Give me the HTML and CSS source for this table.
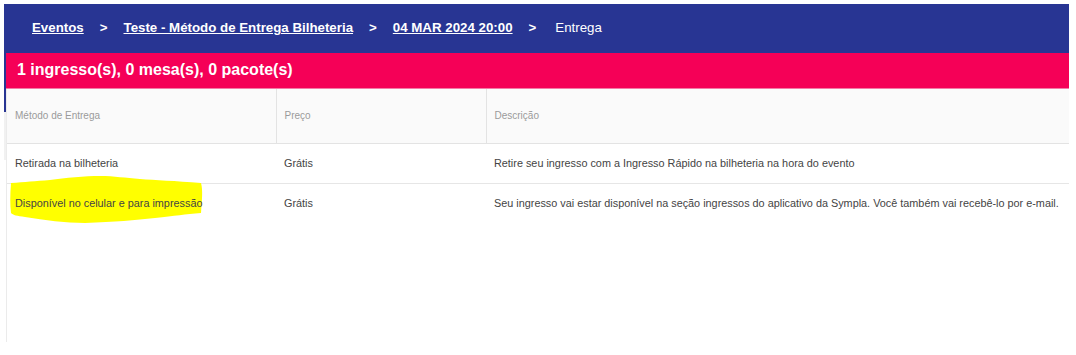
FILE: index.html
```html
<!DOCTYPE html>
<html lang="pt-BR">
<head>
<meta charset="utf-8">
<title>Entrega</title>
<link rel="stylesheet" href="styles.css">
</head>
<body>
<div class="page">
  <nav class="topbar">
    <a class="crumb" href="#">Eventos</a>
    <span class="sep">&gt;</span>
    <a class="crumb" href="#">Teste - Método de Entrega Bilheteria</a>
    <span class="sep">&gt;</span>
    <a class="crumb" href="#">04 MAR 2024 20:00</a>
    <span class="sep">&gt;</span>
    <span class="current">Entrega</span>
  </nav>
  <div class="main">
    <div class="edge"></div>
    <div class="content">
      <div class="summary">1 ingresso(s), 0 mesa(s), 0 pacote(s)</div>
      <div class="table-wrap">
        <table class="grid">
          <colgroup>
            <col class="c1"><col class="c2"><col class="c3">
          </colgroup>
          <thead>
            <tr>
              <th>Método de Entrega</th>
              <th>Preço</th>
              <th>Descrição</th>
            </tr>
          </thead>
          <tbody>
            <tr>
              <td>Retirada na bilheteria</td>
              <td>Grátis</td>
              <td>Retire seu ingresso com a Ingresso Rápido na bilheteria na hora do evento</td>
            </tr>
            <tr class="last">
              <td class="marked">
                <svg class="highlight" viewBox="0 0 200 50" width="200" height="50" aria-hidden="true">
                  <path d="M6 8 C 20 7, 30 6, 45 5 C 60 3, 80 1, 95 1 C 110 1, 120 3, 135 4 C 150 5, 170 6, 196 8 C 198 15, 197 25, 196 38 C 180 39, 170 41, 150 43 C 130 45, 110 47, 80 48 C 60 48, 40 45, 20 42 C 12 41, 8 40, 6 38 C 5 30, 5 20, 6 8 Z" fill="#ffff00"/>
                </svg>
                <span class="label">Disponível no celular e para impressão</span>
              </td>
              <td>Grátis</td>
              <td>Seu ingresso vai estar disponível na seção ingressos do aplicativo da Sympla. Você também vai recebê-lo por e-mail.</td>
            </tr>
          </tbody>
        </table>
      </div>
    </div>
  </div>
</div>
</body>
</html>
```

FILE: styles.css
```css
* { box-sizing: border-box; }

html, body {
  margin: 0;
  padding: 0;
  background: #ffffff;
}

body {
  font-family: "Liberation Sans", Arial, sans-serif;
  color: #444444;
}

.page {
  padding: 4px 7px 0 4px;
}

.topbar {
  height: 49px;
  background: #283593;
  display: flex;
  align-items: center;
  gap: 16px;
  padding: 0 0 2px 28px;
  font-size: 13.3px;
  color: #ffffff;
}

.crumb {
  color: #ffffff;
  font-weight: bold;
  text-decoration: underline;
}

.sep {
  font-weight: bold;
}

.current {
  margin-left: 3px;
  font-weight: normal;
}

.main {
  display: flex;
}

.edge {
  width: 2px;
  flex: none;
  background: linear-gradient(to bottom, #283593 0 59px, #f1f1f1 59px 107px, #ffffff 107px);
}

.content {
  flex: 1;
  min-width: 0;
}

.summary {
  height: 36px;
  background: #f50057;
  border-bottom: 1px solid #f37aa6;
  color: #ffffff;
  font-size: 16px;
  font-weight: bold;
  display: flex;
  align-items: center;
  padding: 0 0 1px 11px;
}

.table-wrap {
  min-height: 253px;
  border-left: 1px solid #ebebeb;
}

.grid {
  width: 100%;
  border-collapse: collapse;
  table-layout: fixed;
}

.c1 { width: 269px; }
.c2 { width: 210px; }

.grid th {
  height: 54px;
  background: #fafafa;
  color: #9a9a9a;
  font-size: 10px;
  font-weight: normal;
  text-align: left;
  padding: 0 0 0 8px;
  border-bottom: 1px solid #e3e3e3;
  border-right: 1px solid #e3e3e3;
}

.grid th:last-child {
  border-right: none;
}

.grid td {
  height: 40px;
  font-size: 10.85px;
  color: #444444;
  padding: 0 0 0 8px;
  border-bottom: 1px solid #e6e6e6;
  white-space: nowrap;
}

.grid tr.last td {
  border-bottom: none;
}

.grid td.marked {
  position: relative;
}

.highlight {
  position: absolute;
  left: -2px;
  top: -9px;
  overflow: visible;
}

.label {
  position: relative;
}
```
